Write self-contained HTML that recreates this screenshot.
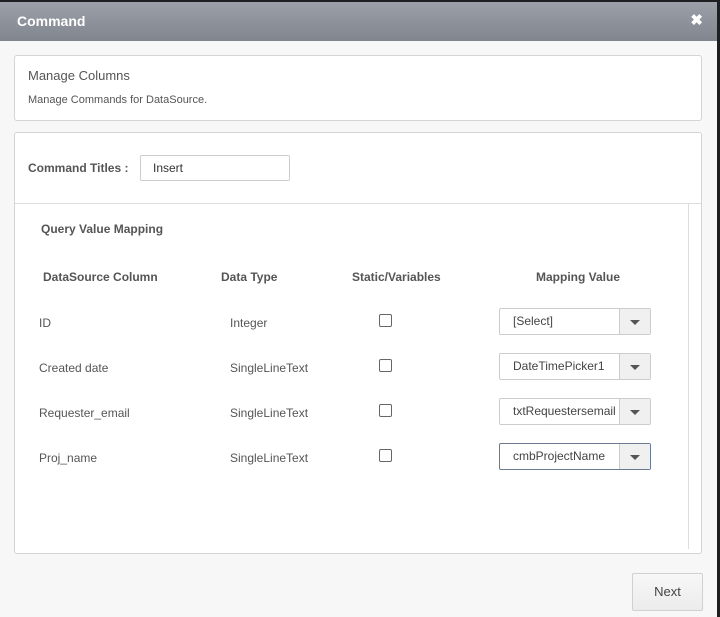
<!DOCTYPE html>
<html><head><style>
*{box-sizing:border-box;margin:0;padding:0}
body{width:720px;height:617px;overflow:hidden;background:#1e1f22;font-family:"Liberation Sans",sans-serif;position:relative}
.win{position:absolute;left:0;top:2px;width:717px;height:615px;background:#f7f7f7}
.hdr{position:absolute;left:0;top:0;width:717px;height:39px;background:linear-gradient(#9ca0a8,#80858e);color:#fff;font-weight:bold;font-size:14px;line-height:38px;padding-left:17px}
.x{position:absolute;right:14px;top:0;font-size:15px}
.p{position:absolute;left:14px;width:688px;background:#fff;border:1px solid #d4d4d4;border-radius:3px}
.t{position:absolute;font-size:12px;color:#555}
.h{font-weight:bold;color:#555}
.cb{position:absolute;left:379px;width:13px;height:13px;border:1px solid #666;border-radius:2px;background:#fff}
.dd{position:absolute;left:499px;width:152px;height:27px;border:1px solid #ccc;border-radius:2px;background:#fff;font-size:12px;color:#444;line-height:25px;padding-left:13px}
.dd .a{position:absolute;right:0;top:0;width:31px;height:25px;border-left:1px solid #ccc;background:#f0f0f0}
.dd .a:after{content:"";position:absolute;left:10px;top:11px;border-left:5px solid transparent;border-right:5px solid transparent;border-top:5px solid #555}
</style></head><body>
<div class="win">
<div class="hdr">Command<span class="x">✖</span></div>
</div>
<div class="p" style="top:55px;height:66px"></div>
<div class="t" style="left:28px;top:68px;font-size:13px;color:#555">Manage Columns</div>
<div class="t" style="left:28px;top:94px;font-size:11px">Manage Commands for DataSource.</div>
<div class="p" style="top:132px;height:422px"></div>
<div style="position:absolute;left:15px;top:203px;width:686px;height:1px;background:#ddd"></div>
<div style="position:absolute;left:688px;top:204px;width:1px;height:345px;background:#ddd"></div>
<div class="t h" style="left:28px;top:161px;font-size:12px">Command Titles :</div>
<div style="position:absolute;left:140px;top:155px;width:150px;height:26px;border:1px solid #ccc;border-radius:2px;background:#fff;font-size:12px;color:#333;line-height:24px;padding-left:12px">Insert</div>
<div class="t h" style="left:41px;top:222px">Query Value Mapping</div>
<div class="t h" style="left:43px;top:270px">DataSource Column</div>
<div class="t h" style="left:221px;top:270px">Data Type</div>
<div class="t h" style="left:352px;top:270px">Static/Variables</div>
<div class="t h" style="left:536px;top:270px">Mapping Value</div>

<div class="t" style="left:39px;top:316px">ID</div>
<div class="t" style="left:230px;top:316px">Integer</div>
<div class="cb" style="top:314px"></div>
<div class="dd" style="top:308px">[Select]<span class="a"></span></div>

<div class="t" style="left:39px;top:361px">Created date</div>
<div class="t" style="left:230px;top:361px">SingleLineText</div>
<div class="cb" style="top:359px"></div>
<div class="dd" style="top:353px">DateTimePicker1<span class="a"></span></div>

<div class="t" style="left:39px;top:406px">Requester_email</div>
<div class="t" style="left:230px;top:406px">SingleLineText</div>
<div class="cb" style="top:404px"></div>
<div class="dd" style="top:398px">txtRequestersemail<span class="a"></span></div>

<div class="t" style="left:39px;top:451px">Proj_name</div>
<div class="t" style="left:230px;top:451px">SingleLineText</div>
<div class="cb" style="top:449px"></div>
<div class="dd" style="top:443px;border-color:#6b7a90">cmbProjectName<span class="a"></span></div>

<div style="position:absolute;left:632px;top:573px;width:71px;height:38px;border:1px solid #d0d0d0;border-radius:2px;background:linear-gradient(#f7f7f7,#ececec);font-size:13px;color:#444;text-align:center;line-height:36px">Next</div>
</body></html>
